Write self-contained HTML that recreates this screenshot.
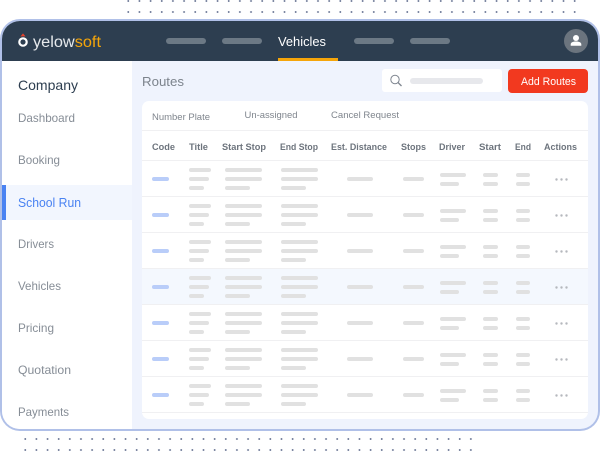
<!DOCTYPE html>
<html><head><meta charset="utf-8"><style>
html,body{margin:0;padding:0;background:#fff}
body{width:600px;height:452px;overflow:hidden;position:relative;font-family:"Liberation Sans",sans-serif}
svg{position:absolute;left:0;top:0}
text{font-family:"Liberation Sans",sans-serif}
</style></head><body>
<svg width="600" height="452" viewBox="0 0 600 452" xmlns="http://www.w3.org/2000/svg">
<defs>
<pattern id="d1" x="122.7" y="-4.500" width="11.16" height="11" patternUnits="userSpaceOnUse"><circle cx="5.58" cy="5.5" r="0.95" fill="#6c7896"/></pattern>
<pattern id="d2" x="19.7" y="433.5" width="11.14" height="11" patternUnits="userSpaceOnUse"><circle cx="5.57" cy="5.5" r="0.95" fill="#6c7896"/></pattern>
<clipPath id="c"><rect x="2" y="21" width="596" height="408" rx="18"/></clipPath>
<g id="r" fill="#e1e1e1">
<rect x="152" y="177" width="17" height="4" rx="2" fill="#b9cdf9"/>
<rect x="189" y="168" width="22" height="4" rx="2"/><rect x="189" y="177" width="20" height="4" rx="2"/><rect x="189" y="186" width="15" height="4" rx="2"/>
<rect x="225" y="168" width="37" height="4" rx="2"/><rect x="225" y="177" width="37" height="4" rx="2"/><rect x="225" y="186" width="25" height="4" rx="2"/>
<rect x="281" y="168" width="37" height="4" rx="2"/><rect x="281" y="177" width="37" height="4" rx="2"/><rect x="281" y="186" width="25" height="4" rx="2"/>
<rect x="347" y="177" width="26" height="4" rx="2"/>
<rect x="403" y="177" width="21" height="4" rx="2"/>
<rect x="440" y="173" width="26" height="4" rx="2"/><rect x="440" y="182" width="19" height="4" rx="2"/>
<rect x="483" y="173" width="15" height="4" rx="2"/><rect x="483" y="182" width="15" height="4" rx="2"/>
<rect x="516" y="173" width="14" height="4" rx="2"/><rect x="516" y="182" width="14" height="4" rx="2"/>
<circle cx="556.5" cy="179.5" r="1.2" fill="#b5b8bd"/><circle cx="561.5" cy="179.5" r="1.2" fill="#b5b8bd"/><circle cx="566.5" cy="179.5" r="1.2" fill="#b5b8bd"/>
</g>
</defs>

<rect x="123" y="-4" width="457" height="22" fill="url(#d1)"/>
<rect x="20" y="434" width="456" height="18" fill="url(#d2)"/>

<rect x="0" y="19" width="600" height="412" rx="20" fill="#b0c0e8"/>
<g clip-path="url(#c)">
<rect x="2" y="21" width="596" height="408" fill="#eff3fd"/>
<rect x="2" y="21" width="596" height="40" fill="#2d3e50"/>
<rect x="2" y="61" width="130" height="368" fill="#fff"/>
<rect x="2" y="185" width="130" height="35" fill="#f2f6fe"/>
<rect x="2" y="185" width="4" height="35" fill="#4a83f2"/>
</g>

<!-- logo -->
<circle cx="23" cy="42" r="3.7" fill="none" stroke="#fff" stroke-width="2.2"/>
<path d="M20.5 36.4 L23 33.4 L25.5 36.4 Z" fill="#e8412a"/>
<text x="33" y="47" font-size="15.5" fill="#e6e9ec" textLength="68" lengthAdjust="spacingAndGlyphs">yelow<tspan fill="#f5a50a">soft</tspan></text>

<!-- nav -->
<g fill="#6c7985">
<rect x="166" y="38" width="40" height="6" rx="3"/><rect x="222" y="38" width="40" height="6" rx="3"/>
<rect x="354" y="38" width="40" height="6" rx="3"/><rect x="410" y="38" width="40" height="6" rx="3"/>
</g>
<text x="278" y="46" font-size="12.5" fill="#fff" textLength="48" lengthAdjust="spacingAndGlyphs">Vehicles</text>
<rect x="278" y="58" width="60" height="3" fill="#f5a50a"/>

<!-- avatar -->
<circle cx="576" cy="41" r="12" fill="#6b747e"/>
<circle cx="576" cy="38" r="3" fill="#fff"/>
<path d="M570.700 45.700 v-1.500 c0-1.800 2.600-2.700 5.300-2.700 s5.300 .9 5.300 2.700 v1.500 Z" fill="#fff"/>

<!-- sidebar -->
<text x="18" y="90" font-size="14" fill="#2d3e50" textLength="60" lengthAdjust="spacingAndGlyphs">Company</text>
<g font-size="12" fill="#868d96">
<text x="18" y="122" textLength="57" lengthAdjust="spacingAndGlyphs">Dashboard</text>
<text x="18" y="164" textLength="42" lengthAdjust="spacingAndGlyphs">Booking</text>
<text x="18" y="248" textLength="36" lengthAdjust="spacingAndGlyphs">Drivers</text>
<text x="18" y="290" textLength="43" lengthAdjust="spacingAndGlyphs">Vehicles</text>
<text x="18" y="332" textLength="36" lengthAdjust="spacingAndGlyphs">Pricing</text>
<text x="18" y="374" textLength="53" lengthAdjust="spacingAndGlyphs">Quotation</text>
<text x="18" y="416" textLength="51" lengthAdjust="spacingAndGlyphs">Payments</text>
</g>
<text x="18" y="207" font-size="12.500" fill="#4a83f2" textLength="63" lengthAdjust="spacingAndGlyphs">School Run</text>

<!-- top content -->
<text x="142" y="86" font-size="13" fill="#7c838c" textLength="42" lengthAdjust="spacingAndGlyphs">Routes</text>
<rect x="382" y="69" width="120" height="23" rx="3" fill="#fff"/>
<circle cx="395" cy="79.5" r="4.2" fill="none" stroke="#7f8690" stroke-width="1"/>
<path d="M398 82.500 L401.500 86" stroke="#7f8690" stroke-width="1.3"/>
<rect x="410" y="78" width="73" height="6" rx="3" fill="#e7e8ec"/>
<rect x="508" y="69" width="80" height="24" rx="4" fill="#f2391f"/>
<text x="521" y="85" font-size="11" fill="#fff" textLength="55" lengthAdjust="spacingAndGlyphs">Add Routes</text>

<!-- table -->
<rect x="142" y="101" width="446" height="318" rx="7" fill="#fff"/>
<rect x="142" y="269" width="446" height="35" fill="#f4f8fe"/>
<g fill="#f0f0f2">
<rect x="142" y="130" width="446" height="1"/><rect x="142" y="160" width="446" height="1"/>
<rect x="142" y="196" width="446" height="1"/><rect x="142" y="232" width="446" height="1"/>
<rect x="142" y="268" width="446" height="1"/><rect x="142" y="304" width="446" height="1"/>
<rect x="142" y="340" width="446" height="1"/><rect x="142" y="376" width="446" height="1"/>
<rect x="142" y="412" width="446" height="1"/>
</g>
<g font-size="9.500" fill="#7f858d">
<text x="152" y="120" textLength="58" lengthAdjust="spacingAndGlyphs">Number Plate</text>
<text x="244.500" y="118" textLength="53" lengthAdjust="spacingAndGlyphs">Un-assigned</text>
<text x="331" y="118" textLength="68" lengthAdjust="spacingAndGlyphs">Cancel Request</text>
</g>
<g font-size="9.500" font-weight="700" fill="#6d747d">
<text x="152" y="150" textLength="23" lengthAdjust="spacingAndGlyphs">Code</text>
<text x="189" y="150" textLength="19" lengthAdjust="spacingAndGlyphs">Title</text>
<text x="222" y="150" textLength="44" lengthAdjust="spacingAndGlyphs">Start Stop</text>
<text x="280" y="150" textLength="38" lengthAdjust="spacingAndGlyphs">End Stop</text>
<text x="331" y="150" textLength="56" lengthAdjust="spacingAndGlyphs">Est. Distance</text>
<text x="401" y="150" textLength="25" lengthAdjust="spacingAndGlyphs">Stops</text>
<text x="439" y="150" textLength="26" lengthAdjust="spacingAndGlyphs">Driver</text>
<text x="479" y="150" textLength="22" lengthAdjust="spacingAndGlyphs">Start</text>
<text x="515" y="150" textLength="16" lengthAdjust="spacingAndGlyphs">End</text>
<text x="544" y="150" textLength="33" lengthAdjust="spacingAndGlyphs">Actions</text>
</g>
<use href="#r" y="0"/><use href="#r" y="36"/><use href="#r" y="72"/><use href="#r" y="108"/>
<use href="#r" y="144"/><use href="#r" y="180"/><use href="#r" y="216"/>
</svg>
</body></html>
